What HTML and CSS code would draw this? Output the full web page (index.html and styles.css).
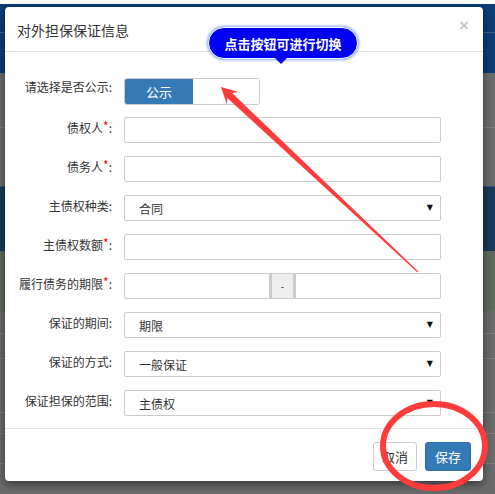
FILE: index.html
```html
<!DOCTYPE html>
<html lang="zh">
<head>
<meta charset="utf-8">
<title>对外担保保证信息</title>
<link rel="stylesheet" href="styles.css">
</head>
<body>
<div class="page">
  <div class="modal">
    <div class="modal-header">
      <span class="title">对外担保保证信息</span>
      <span class="close">×</span>
    </div>
    <div class="modal-body">
      <label class="lbl lbl-toggle">请选择是否公示:</label>
      <div class="toggle"><span class="toggle-on">公示</span><span class="toggle-off"></span></div>

      <label class="lbl">债权人<span class="req">*</span>:</label>
      <input class="field" type="text">

      <label class="lbl">债务人<span class="req">*</span>:</label>
      <input class="field" type="text">

      <label class="lbl">主债权种类:</label>
      <div class="field select"><span>合同</span><span class="caret">▼</span></div>

      <label class="lbl">主债权数额<span class="req">*</span>:</label>
      <input class="field" type="text">

      <label class="lbl">履行债务的期限<span class="req">*</span>:</label>
      <div class="input-group">
        <input class="field field-left" type="text">
        <span class="addon">-</span>
        <input class="field field-right" type="text">
      </div>

      <label class="lbl">保证的期间:</label>
      <div class="field select"><span>期限</span><span class="caret">▼</span></div>

      <label class="lbl">保证的方式:</label>
      <div class="field select"><span>一般保证</span><span class="caret">▼</span></div>

      <label class="lbl">保证担保的范围:</label>
      <div class="field select"><span>主债权</span><span class="caret">▼</span></div>
    </div>
    <div class="modal-footer">
      <button class="btn btn-default">取消</button>
      <button class="btn btn-primary">保存</button>
    </div>
  </div>

  <div class="tip">点击按钮可进行切换</div>

  <svg class="annot" width="495" height="494" viewBox="0 0 495 494">
    <polygon class="arrow" points="221,87 238.5,92.1 232.1,93 418.4,271.6 417.6,272.4 227.3,98.1 226.9,104.5"/>
    <ellipse class="ring" cx="434" cy="446" rx="51" ry="42"/>
  </svg>
</div>
</body>
</html>
```

FILE: styles.css
```css
html, body {
  margin: 0;
  padding: 0;
}

body {
  width: 495px;
  height: 494px;
  overflow: hidden;
  font-family: "Noto Sans CJK SC", "Noto Sans", "Liberation Sans", sans-serif;
  color: #333;
  background:
    linear-gradient(to bottom,
      #ffffff 0, #ffffff 4px,
      #0b3d78 4px, #0b3d78 32px,
      #3a5f88 32px, #3a5f88 33px,
      #0b3d78 33px, #0b3d78 73px,
      #6c6c6c 73px, #6c6c6c 127px,
      #7c7c7c 127px, #7c7c7c 128px,
      #6c6c6c 128px, #6c6c6c 186px,
      #2c5480 186px, #2c5480 187px,
      #1b3a5a 187px, #1b3a5a 251px,
      #5e6a5c 251px, #5e6a5c 311px,
      #6a6a6a 311px, #6a6a6a 333px,
      #7d7d7d 333px, #7d7d7d 334px,
      #6a6a6a 334px, #6a6a6a 358px,
      #7d7d7d 358px, #7d7d7d 359px,
      #6a6a6a 359px, #6a6a6a 412px,
      #7d7d7d 412px, #7d7d7d 413px,
      #6a6a6a 413px, #6a6a6a 433px,
      #7d7d7d 433px, #7d7d7d 434px,
      #6a6a6a 434px, #6a6a6a 463px,
      #7d7d7d 463px, #7d7d7d 464px,
      #6a6a6a 464px);
}

.page {
  position: relative;
  width: 495px;
  height: 494px;
}

.modal {
  position: absolute;
  left: 5px;
  top: 7px;
  width: 478px;
  background: #fff;
  border-radius: 4px;
  box-shadow: 0 3px 9px rgba(0, 0, 0, 0.5);
  display: flex;
  flex-direction: column;
}

.modal-header {
  height: 44px;
  border-bottom: 1px solid #e5e5e5;
  display: flex;
  align-items: center;
  justify-content: space-between;
  padding: 0 14px 0 12px;
}

.title {
  font-size: 14px;
  line-height: 20px;
  color: #333;
  margin-top: 2px;
}

.close {
  font-family: "Liberation Sans", sans-serif;
  font-size: 17px;
  font-weight: bold;
  line-height: 17px;
  color: #c8c8c8;
  align-self: flex-start;
  margin-top: 10px;
}

.modal-body {
  display: grid;
  grid-template-columns: 107px 317px;
  column-gap: 12px;
  row-gap: 13px;
  grid-auto-rows: 26px;
  padding: 26px 0 12px 0;
}

.lbl {
  font-size: 12px;
  line-height: 14px;
  color: #333;
  text-align: right;
  padding-top: 4px;
  white-space: nowrap;
}

.lbl-toggle {
  padding-top: 2px;
}

.req {
  color: #f00;
  font-size: 12px;
  line-height: 10px;
  vertical-align: 2px;
}

.toggle {
  width: 136px;
  height: 27px;
  box-sizing: border-box;
  border: 1px solid #ccc;
  border-radius: 3px;
  display: flex;
  overflow: hidden;
  align-self: start;
}

.toggle-on {
  width: 68px;
  background: #337ab7;
  color: #fff;
  font-size: 13px;
  display: flex;
  align-items: center;
  justify-content: center;
}

.toggle-off {
  flex: 1;
  background: #fff;
}

.field {
  box-sizing: border-box;
  height: 26px;
  margin: 0;
  border: 1px solid #ccc;
  border-radius: 2px;
  background: #fff;
  font-family: inherit;
  font-size: 12px;
  color: #333;
  padding: 0 8px;
  outline: none;
  min-width: 0;
}

.modal-body > .field {
  width: 317px;
}

.select {
  display: flex;
  align-items: center;
  justify-content: space-between;
  padding: 0 7px 0 14px;
  line-height: 14px;
}

.select span:first-child {
  margin-top: 2px;
}

.caret {
  font-family: "DejaVu Sans", sans-serif;
  font-size: 8px;
  color: #111;
}

.input-group {
  display: flex;
  height: 26px;
}

.field-left {
  width: 146px;
  border-radius: 2px 0 0 2px;
}

.field-right {
  flex: 1;
  border-radius: 0 2px 2px 0;
}

.addon {
  box-sizing: border-box;
  width: 25px;
  height: 26px;
  background: #eee;
  border-top: 1px solid #ccc;
  border-bottom: 1px solid #ccc;
  border-left: 2px solid #ccc;
  border-right: 2px solid #ccc;
  color: #555;
  font-family: "Liberation Sans", sans-serif;
  font-size: 10px;
  display: flex;
  align-items: center;
  justify-content: center;
}

.modal-footer {
  border-top: 1px solid #e5e5e5;
  display: flex;
  justify-content: flex-end;
  gap: 8px;
  padding: 13px 12px 10px 0;
}

.btn {
  box-sizing: border-box;
  height: 29px;
  border-radius: 3px;
  font-family: inherit;
  font-size: 13px;
  padding: 0;
  cursor: pointer;
}

.btn-default {
  width: 44px;
  background: #fff;
  border: 1px solid #ccc;
  color: #333;
}

.btn-primary {
  width: 46px;
  background: #337ab7;
  border: 1px solid #2e6da4;
  color: #fff;
}

.tip {
  position: absolute;
  left: 208px;
  top: 27px;
  width: 150px;
  height: 32px;
  box-sizing: border-box;
  border-radius: 16px;
  background: #0000f2;
  border: 1px solid #fff;
  box-shadow: 0 0 3px 1px #7fa8ff;
  color: #fff;
  font-size: 13px;
  font-weight: bold;
  display: flex;
  align-items: center;
  justify-content: center;
  letter-spacing: 0;
}

.tip::after {
  content: "";
  position: absolute;
  left: 66px;
  bottom: -6px;
  width: 0;
  height: 0;
  border-left: 6px solid transparent;
  border-right: 6px solid transparent;
  border-top: 6px solid #0000f2;
}

.annot {
  position: absolute;
  left: 0;
  top: 0;
  pointer-events: none;
}

.arrow {
  fill: #ff3b3b;
}

.ring {
  fill: none;
  stroke: #ff3b3b;
  stroke-width: 6;
}
```
